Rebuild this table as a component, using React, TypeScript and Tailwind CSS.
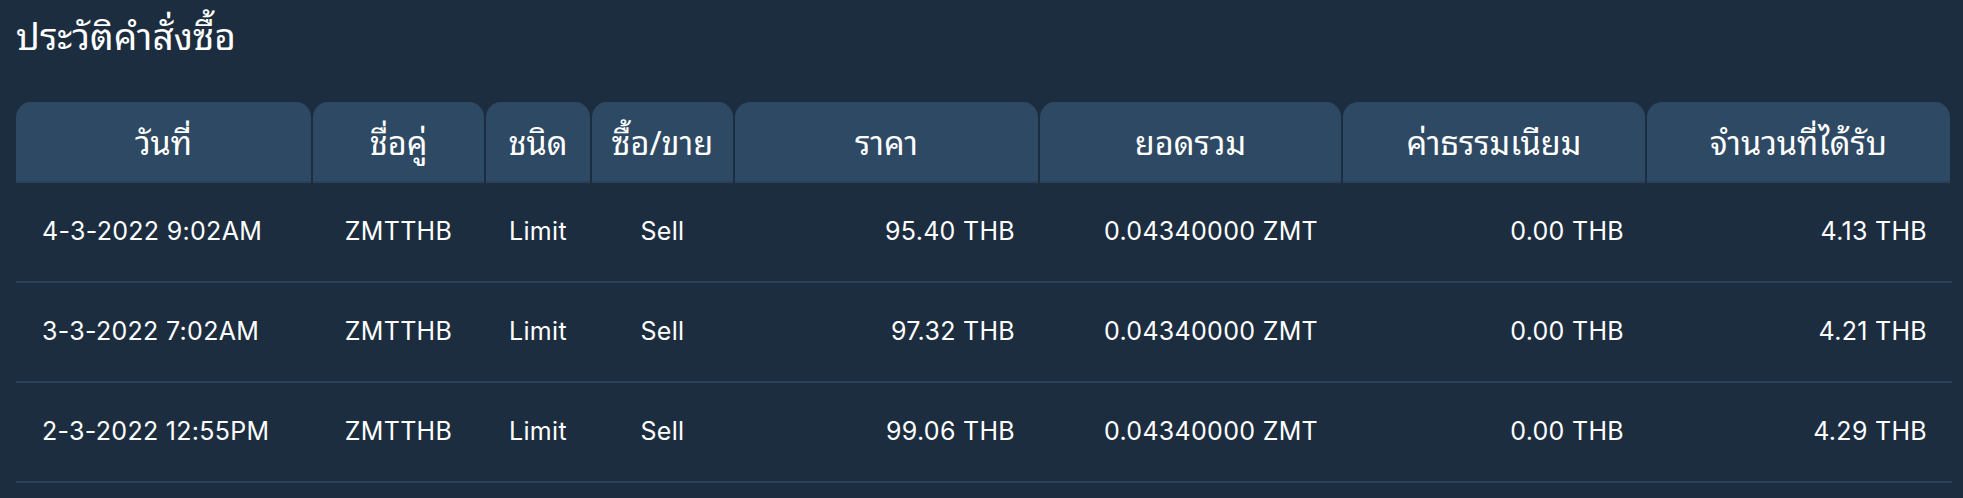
import React from "react";

const cols = "grid-cols-[295px_171px_104px_141px_303px_301px_302px_303px]";

const headers = ["วันที่", "ชื่อคู่", "ชนิด", "ซื้อ/ขาย", "ราคา", "ยอดรวม", "ค่าธรรมเนียม", "จำนวนที่ได้รับ"];

const rows = [
  ["4-3-2022 9:02AM", "ZMTTHB", "Limit", "Sell", "95.40 THB", "0.04340000 ZMT", "0.00 THB", "4.13 THB"],
  ["3-3-2022 7:02AM", "ZMTTHB", "Limit", "Sell", "97.32 THB", "0.04340000 ZMT", "0.00 THB", "4.21 THB"],
  ["2-3-2022 12:55PM", "ZMTTHB", "Limit", "Sell", "99.06 THB", "0.04340000 ZMT", "0.00 THB", "4.29 THB"],
];

const align = ["justify-start pl-[26px]", "justify-center", "justify-center", "justify-center", "justify-end pr-[23px]", "justify-end pr-[23px]", "justify-end pr-[21px]", "justify-end pr-[23px]"];

export default function App() {
  return (
    <div className="w-[1963px] h-[498px] bg-[#1d2d40] text-white overflow-hidden">
      <div className="h-[102px] pl-[16px] pt-[9px]">
        <h1 className="text-[37px] leading-[50px] font-['Noto_Sans_Thai_Looped','Noto_Sans_Thai',sans-serif]">ประวัติคำสั่งซื้อ</h1>
      </div>
      <div className="ml-[16px] w-[1936px]">
        <div className={`grid ${cols} gap-x-[2px] bg-[#1d2d40]`}>
          {headers.map((h) => (
            <div
              key={h}
              className="h-[81px] pb-[3px] rounded-t-[15px] bg-[#2e4963] border-b-2 border-[#2a4259] flex items-center justify-center text-[32.5px] font-['Noto_Sans_Thai_Looped','Noto_Sans_Thai',sans-serif]"
            >
              {h}
            </div>
          ))}
        </div>
        {rows.map((r, i) => (
          <div key={i} className={`grid ${cols} gap-x-[2px] h-[100px] border-b-2 border-[#2b3f55]`}>
            {r.map((c, j) => (
              <div key={j} className={`flex items-center ${align[j]} text-[25px] tracking-[0.3px] font-['Inter',sans-serif]`}>
                {c}
              </div>
            ))}
          </div>
        ))}
      </div>
    </div>
  );
}
